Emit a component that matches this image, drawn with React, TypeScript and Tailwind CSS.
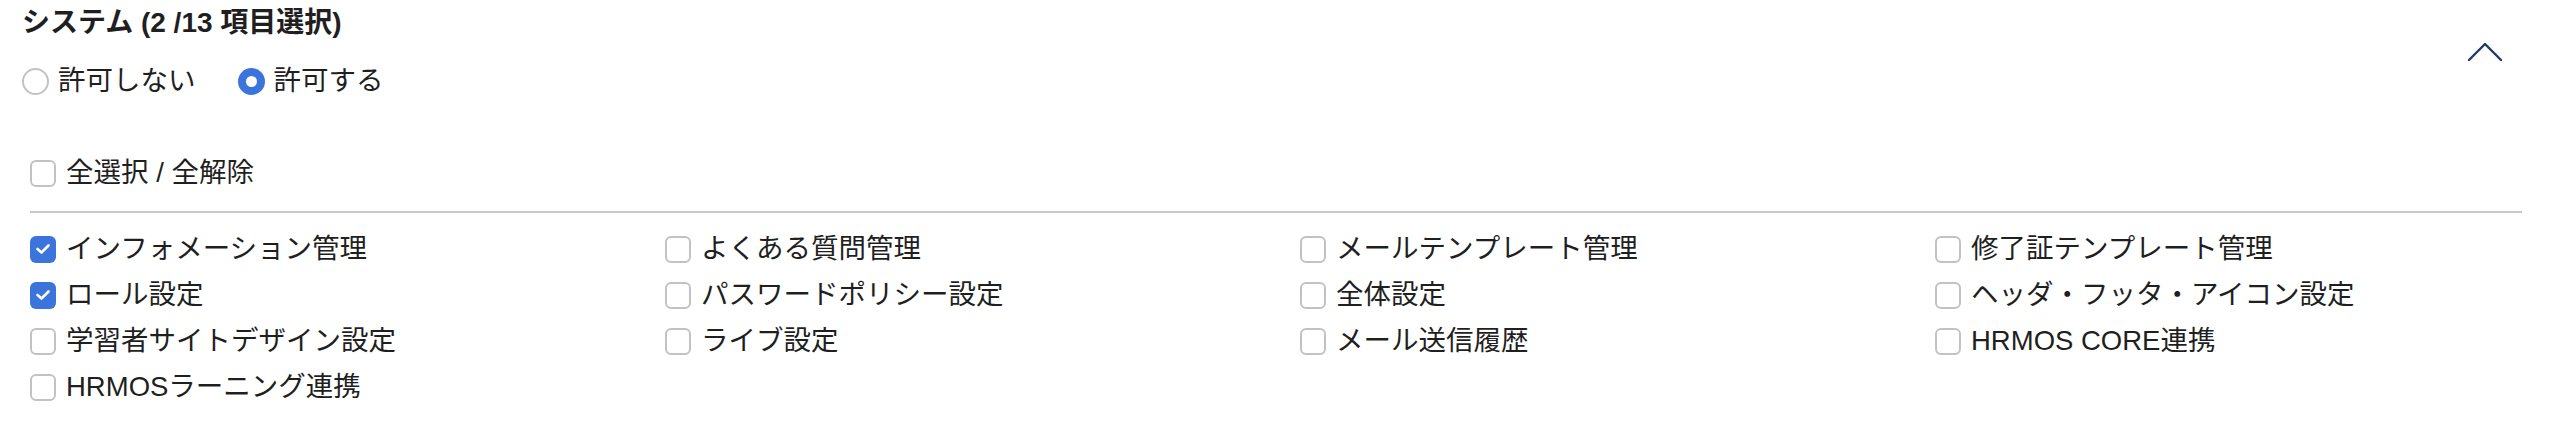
import { useState } from "react";

const ITEMS = [
  "インフォメーション管理",
  "よくある質問管理",
  "メールテンプレート管理",
  "修了証テンプレート管理",
  "ロール設定",
  "パスワードポリシー設定",
  "全体設定",
  "ヘッダ・フッタ・アイコン設定",
  "学習者サイトデザイン設定",
  "ライブ設定",
  "メール送信履歴",
  "HRMOS CORE連携",
  "HRMOSラーニング連携",
];

const FONT = { fontFamily: '"Liberation Sans", "Noto Sans CJK JP", sans-serif' };

export default function App() {
  const [allow, setAllow] = useState(true);
  const [checked, setChecked] = useState<string[]>(["インフォメーション管理", "ロール設定"]);
  const [open, setOpen] = useState(true);

  function toggle(name: string) {
    setChecked((current) =>
      current.includes(name) ? current.filter((n) => n !== name) : [...current, name]
    );
  }

  const allChecked = checked.length === ITEMS.length;

  return (
    <div className="h-[432px] w-full bg-white text-[#1f1f1f]" style={FONT}>
      <div className="flex items-center justify-between pl-[22px] pr-[48px] pt-[5px]">
        <div>
          <h2 className="text-[28px] font-bold leading-[36px]">
            システム ({checked.length} /{ITEMS.length} 項目選択)
          </h2>
          <div className="mt-[22px] flex h-[36px] items-center gap-[42px] text-[27.5px]">
            <Radio label="許可しない" selected={!allow} onClick={() => setAllow(false)} />
            <Radio label="許可する" selected={allow} onClick={() => setAllow(true)} />
          </div>
        </div>
        <button type="button" onClick={() => setOpen(!open)} className="flex h-[32px] w-[34px] items-center justify-center">
          <svg width="34" height="18" viewBox="0 0 34 18" fill="none">
            <path d="M1 17 L17 1 L33 17" stroke="#213a63" strokeWidth="2.4" strokeLinecap="round" strokeLinejoin="round" />
          </svg>
        </button>
      </div>

      {open && (
        <div className="w-[2522px] pl-[30px]">
          <div className="mt-[56px] flex h-[36px] items-center">
            <Checkbox
              label="全選択 / 全解除"
              checked={allChecked}
              onClick={() => setChecked(allChecked ? [] : [...ITEMS])}
            />
          </div>
          <div className="mt-[20px] h-[2px] bg-[#c8c8c8]" />
          <div className="mt-[18px] grid grid-cols-4 gap-x-[48px] gap-y-[10px]">
            {ITEMS.map((item) => (
              <div key={item} className="flex h-[36px] items-center">
                <Checkbox label={item} checked={checked.includes(item)} onClick={() => toggle(item)} />
              </div>
            ))}
          </div>
        </div>
      )}
    </div>
  );
}

function Radio({ label, selected, onClick }: { label: string; selected: boolean; onClick: () => void }) {
  return (
    <button type="button" onClick={onClick} className="flex items-center gap-[9px] leading-[36px]">
      {selected ? (
        <span className="flex h-[27px] w-[27px] items-center justify-center rounded-full bg-[#3b74db]">
          <span className="h-[11px] w-[11px] rounded-full bg-white" />
        </span>
      ) : (
        <span className="h-[27px] w-[27px] rounded-full border-2 border-[#c2c2c2] bg-white" />
      )}
      <span>{label}</span>
    </button>
  );
}

function Checkbox({ label, checked, onClick }: { label: string; checked: boolean; onClick: () => void }) {
  return (
    <button type="button" onClick={onClick} className="flex items-center gap-[10px] text-[27.5px] leading-[36px]">
      {checked ? (
        <span className="flex h-[27px] w-[26px] items-center justify-center rounded-[6px] bg-[#3b74db]">
          <svg width="14" height="10" viewBox="0 0 14 10" fill="none">
            <path d="M1.5 5 L5.5 8.5 L12.5 1.5" stroke="white" strokeWidth="2.6" strokeLinecap="round" strokeLinejoin="round" />
          </svg>
        </span>
      ) : (
        <span className="h-[27px] w-[26px] rounded-[6px] border-2 border-[#c2c2c2] bg-white" />
      )}
      <span>{label}</span>
    </button>
  );
}
